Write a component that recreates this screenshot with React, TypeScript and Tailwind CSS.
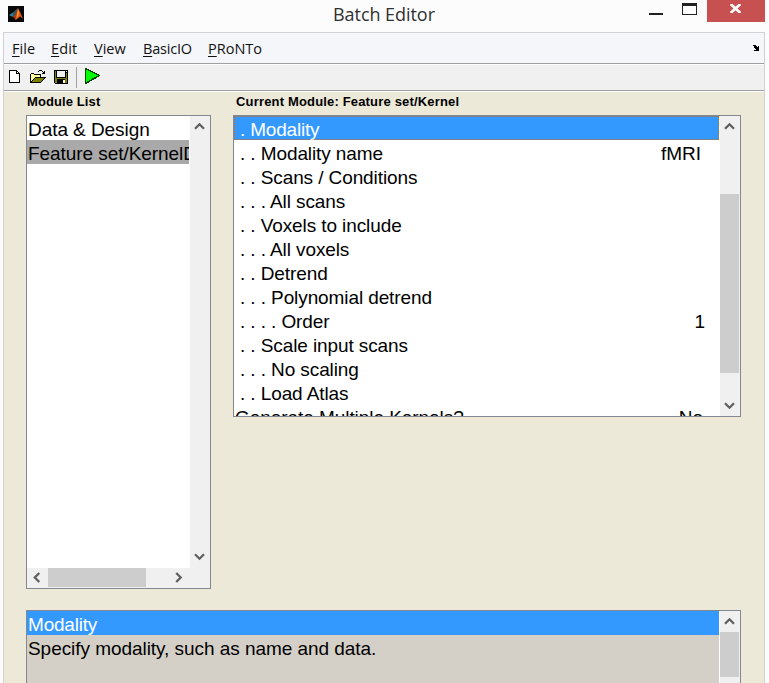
import React from "react";

const menus = [
  { label: "File", w: "w-[39px]", spacing: "tracking-[0.1px]" },
  { label: "Edit", w: "w-[43px]", spacing: "tracking-[0.1px]" },
  { label: "View", w: "w-[49px]", spacing: "tracking-[0px]" },
  { label: "BasicIO", w: "w-[65px]", spacing: "tracking-[-0.2px]" },
  { label: "PRoNTo", w: "w-[70px]", spacing: "tracking-[0px]" },
];

const moduleRows = [
  { text: ". Modality", value: "" },
  { text: ". . Modality name", value: "fMRI" },
  { text: ". . Scans / Conditions", value: "" },
  { text: ". . . All scans", value: "" },
  { text: ". . Voxels to include", value: "" },
  { text: ". . . All voxels", value: "" },
  { text: ". . Detrend", value: "" },
  { text: ". . . Polynomial detrend", value: "" },
  { text: ". . . . Order", value: "1" },
  { text: ". . Scale input scans", value: "" },
  { text: ". . . No scaling", value: "" },
  { text: ". . Load Atlas", value: "" },
];

const ROW = "h-[24px] shrink-0 whitespace-pre text-[19px]";

function Chevron({ dir }: { dir: "up" | "down" | "left" | "right" }) {
  const d = {
    up: "M1 6.8 L5.5 2.3 L10 6.8",
    down: "M1 2.2 L5.5 6.7 L10 2.2",
    left: "M7.3 1 L2.8 5.5 L7.3 10",
    right: "M2.2 1 L6.7 5.5 L2.2 10",
  }[dir];
  const vertical = dir === "up" || dir === "down";
  return (
    <svg width={vertical ? 11 : 9} height={vertical ? 9 : 11} className="block shrink-0" fill="none" stroke="#606060" strokeWidth="2.3">
      <path d={d} />
    </svg>
  );
}

function MatlabIcon() {
  return (
    <svg width="16" height="16" className="block">
      <rect width="16" height="16" fill="#080808" />
      <path d="M1 9 L5 6.5 L7 7.5 L5 10.5 L3.5 10.5 Z" fill="#2f7f98" />
      <path d="M5 6.5 L10 2 L7.5 9 L5.5 11 Z" fill="#315b6d" />
      <path d="M4 11 L6.5 9.5 L10 2 L8.5 12 L7.5 14 L6 11.5 Z" fill="#a83c16" />
      <path d="M10 2 L12 6 L15 12.5 L12 10.5 L9 13 L7.5 14 Z" fill="#df5b18" />
      <path d="M10 3 L11 7 L9 12 L8.5 11 Z" fill="#f7a52b" />
    </svg>
  );
}

function NewIcon() {
  return (
    <svg width="12" height="14" className="block" shapeRendering="crispEdges">
      <path d="M0 0h8v1h1v1h1v1h1v10H0z" fill="#000" />
      <path d="M1 1h6v3h3v8H1z" fill="#fff" />
      <path d="M8 2h1v1H8z" fill="#fff" />
    </svg>
  );
}

function OpenIcon() {
  return (
    <svg width="16" height="14" className="block" shapeRendering="crispEdges">
      <path d="M9 0h3v1H9zM8 1h1v1H8zM12 1h1v1h-1zM14 1h1v3h-3V3h1V2h1zM1 3h3v1H1zM0 4h1v9H0zM4 4h7v1H4zM10 5h1v2h-1zM5 7h11v1H5zM4 8h1v1H4zM3 9h1v1H3zM2 10h1v1H2zM1 11h1v1H1zM14 8h1v1h-1zM13 9h1v1h-1zM12 10h1v1h-1zM11 11h1v1h-1zM0 12h11v1H0z" fill="#000" />
      <path d="M1 4h3v1h6v2H5v1H4v1H3v1H2v1H1z" fill="#ffff99" />
      <path d="M5 8h9v1h-1v1h-1v1h-1v1H2v-1h1v-1h1V9h1z" fill="#808000" />
    </svg>
  );
}

function SaveIcon() {
  return (
    <svg width="14" height="14" className="block" shapeRendering="crispEdges">
      <path d="M0 0h14v14H1v-1H0z" fill="#000" />
      <path d="M1 1h1v7h10V3h1v10H1z" fill="#808000" />
      <path d="M3 1h8v6H3z" fill="#f0f0f0" />
      <path d="M12 1h1v1h-1z" fill="#f0f0f0" />
      <path d="M3 9h8v4H3z" fill="#000" />
      <path d="M9 10h2v3H9z" fill="#f0f0f0" />
    </svg>
  );
}

function RunIcon() {
  return (
    <svg width="15" height="16" className="block" shapeRendering="crispEdges">
      <path d="M0 0 L1 0 L15 7 L15 8 L1 16 L0 16 Z" fill="#004800" />
      <path d="M1 1.5 L13 7.5 L1 14 Z" fill="#00ff00" />
    </svg>
  );
}

export default function App() {
  return (
    <div className="flex h-[683px] w-[769px] flex-col overflow-hidden bg-[#fcfcfc] text-black [font-family:'Liberation_Sans',Arial,sans-serif]">
      <header className="flex h-[32px] shrink-0 items-start pl-[8px]">
        <div className="mt-[6px] w-[16px]"><MatlabIcon /></div>
        <div className="ml-[309px] w-[315px] pt-[1px] text-[18px] leading-[26px] tracking-[-0.05px] whitespace-nowrap text-[#303030] [font-family:'Open_Sans',sans-serif]">Batch Editor</div>
        <div className="mt-[13px] ml-[1px] h-[2px] w-[14px] bg-[#222]" />
        <div className="mt-[3px] ml-[19px] h-[12px] w-[15px] border border-t-[3px] border-[#222]" />
        <div className="ml-[10px] flex h-[22px] w-[58px] justify-center bg-[#c75050] pt-[4px] pr-px">
          <svg width="11" height="9" className="block" stroke="#fff" strokeWidth="2.6">
            <path d="M0.7 0 L10.3 9 M10.3 0 L0.7 9" />
          </svg>
        </div>
      </header>

      <main className="ml-[3px] flex h-[651px] w-[762px] flex-col border-x border-t border-[#d0d1d5] bg-[#ece9d8]">
        <nav className="flex h-[31px] shrink-0 border-b border-[#a0a0a0] bg-[#f5f6f9] pl-[8px] text-[14.5px] leading-[31px] text-[#111] [font-family:'Open_Sans',sans-serif]">
          {menus.map((m) => (
            <div key={m.label} className={`${m.w} ${m.spacing} whitespace-nowrap`}>
              <span className="underline decoration-1 underline-offset-2">{m.label[0]}</span>
              {m.label.slice(1)}
            </div>
          ))}
          <svg width="8" height="6" className="mt-[12px] mr-[4px] ml-auto block" shapeRendering="crispEdges">
            <path d="M1 0h3v1h1v1h1V1h1v5H2V5h2V4H3V3H2V1H0V1h1z" fill="#000" />
          </svg>
        </nav>
        <div className="flex h-[27px] shrink-0 border-t border-b border-t-white border-b-[#a0a0a0] bg-[#f0f0f0] pl-[5px]">
          <div className="mt-[5px] w-[21px]"><NewIcon /></div>
          <div className="mt-[5px] w-[24px]"><OpenIcon /></div>
          <div className="mt-[5px] w-[22px]"><SaveIcon /></div>
          <div className="mt-[2px] h-[21px] w-px bg-[#a0a0a0]" />
          <div className="mt-[3px] ml-[8px]"><RunIcon /></div>
        </div>
        <div className="h-px shrink-0 bg-white" />

        <div className="flex h-[23px] shrink-0 pl-[23px] text-[13px] leading-[19px] font-bold">
          <div className="w-[209px] tracking-[0.1px]">Module List</div>
          <div className="tracking-[0.17px]">Current Module: Feature set/Kernel</div>
        </div>

        <div className="flex shrink-0 items-start gap-[22px] pl-[22px]">
          <section className="flex h-[474px] w-[185px] flex-col border border-[#828790] bg-white">
            <div className="flex h-[452px]">
              <div className="w-[163px] overflow-hidden">
                <div className={`${ROW} pl-px leading-[27px] tracking-[-0.06px]`}>Data &amp; Design</div>
                <div className={`${ROW} w-[162px] overflow-hidden bg-[#a9a9a9] pl-px leading-[27px] tracking-[-0.06px]`}>Feature set/KernelD</div>
              </div>
              <div className="flex w-[20px] flex-col items-center justify-between bg-[#f0f0f0] pt-[6px] pb-[7px] pr-px">
                <Chevron dir="up" />
                <Chevron dir="down" />
              </div>
            </div>
            <div className="flex h-[20px] items-start bg-[#f0f0f0] pl-[5px]">
              <div className="mt-[4px] w-[16px]"><Chevron dir="left" /></div>
              <div className="h-[19px] w-[98px] bg-[#cdcdcd]" />
              <div className="mt-[4px] ml-[28px]"><Chevron dir="right" /></div>
            </div>
          </section>

          <section className="flex h-[302px] w-[508px] overflow-hidden border border-[#828790] bg-white">
            <div className="flex h-[300px] w-[486px] flex-col overflow-hidden">
              {moduleRows.map((r, i) => (
                <div
                  key={r.text}
                  className={`${ROW} flex justify-between ${i === 0 ? "w-[485px] border border-dotted border-[#d06810] bg-[#3399ff] pl-[5px] leading-[25px] text-white" : "pl-[6px] leading-[27px]"}`}
                >
                  <span className={i === 0 ? "tracking-[-0.2px]" : "tracking-[-0.1px]"}>{r.text}</span>
                  <span className={r.value === "1" ? "mr-[15px]" : "mr-[19px]"}>{r.value}</span>
                </div>
              ))}
              <div className={`${ROW} flex justify-between pl-px leading-[27px]`}>
                <span className="tracking-[-0.06px]">Generate Multiple Kernels?</span>
                <span className="mr-[17px]">No</span>
              </div>
            </div>
            <div className="flex h-[300px] w-[20px] flex-col bg-[#f0f0f0]">
              <div className="flex h-[78px] justify-center pt-[6px] pr-px"><Chevron dir="up" /></div>
              <div className="h-[179px] w-[19px] bg-[#cdcdcd]" />
              <div className="flex justify-center pt-[28px] pr-px"><Chevron dir="down" /></div>
            </div>
          </section>
        </div>

        <section className="mt-[21px] ml-[22px] flex h-[74px] w-[715px] shrink-0 border border-b-0 border-[#828790] bg-[#d4d0c8]">
          <div className="w-[692px]">
            <div className={`${ROW} bg-[#3399ff] pl-px leading-[27px] tracking-[-0.2px] text-white`}>Modality</div>
            <div className={`${ROW} pl-px leading-[27px] tracking-[-0.05px]`}>Specify modality, such as name and data.</div>
          </div>
          <div className="w-px bg-white" />
          <div className="w-[20px] bg-[#f0f0f0]">
            <div className="flex h-[21px] justify-center pt-[6px] pr-px"><Chevron dir="up" /></div>
            <div className="h-[45px] w-[19px] bg-[#cdcdcd]" />
          </div>
        </section>
      </main>
    </div>
  );
}
